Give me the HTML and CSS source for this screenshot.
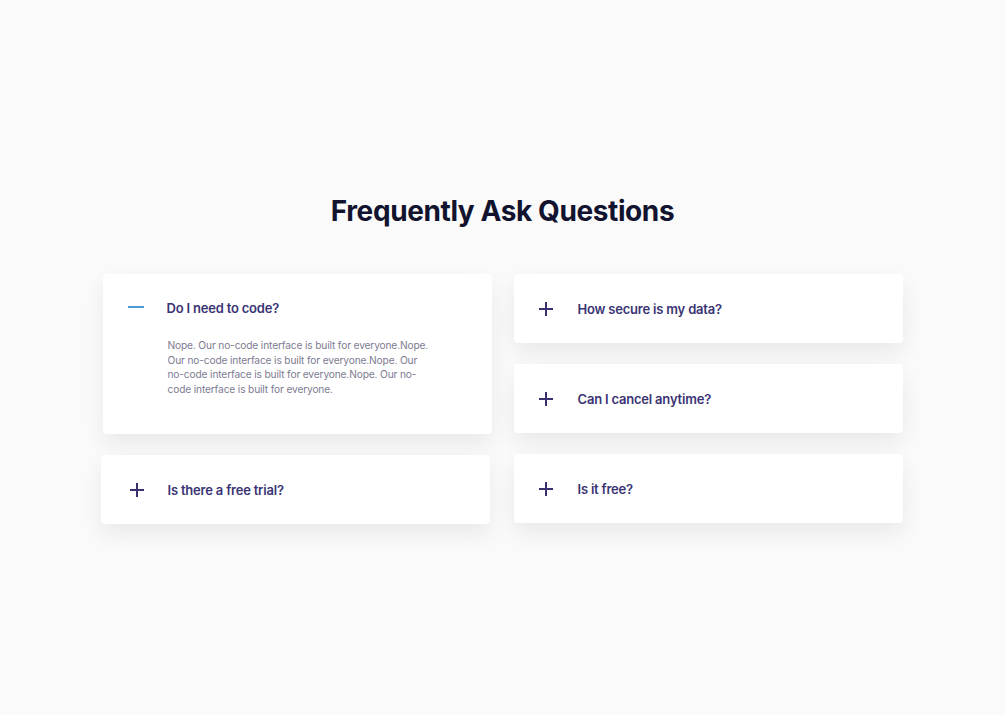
FILE: index.html
```html
<!DOCTYPE html>
<html lang="en">
<head>
<meta charset="utf-8">
<title>FAQ</title>
<link rel="stylesheet" href="styles.css">
</head>
<body>
<main class="faq">
  <h1 class="faq-title">Frequently Ask Questions</h1>
  <div class="faq-grid">
    <div class="faq-col">
      <div class="faq-item open">
        <div class="faq-head">
          <span class="faq-icon minus"></span>
          <span class="faq-q">Do I need to code?</span>
        </div>
        <p class="faq-a">Nope. Our no-code interface is built for everyone.Nope. Our no-code interface is built for everyone.Nope. Our no-code interface is built for everyone.Nope. Our no-code interface is built for everyone.</p>
      </div>
      <div class="faq-item shifted">
        <div class="faq-head">
          <span class="faq-icon plus"></span>
          <span class="faq-q">Is there a free trial?</span>
        </div>
      </div>
    </div>
    <div class="faq-col">
      <div class="faq-item">
        <div class="faq-head">
          <span class="faq-icon plus"></span>
          <span class="faq-q">How secure is my data?</span>
        </div>
      </div>
      <div class="faq-item">
        <div class="faq-head">
          <span class="faq-icon plus"></span>
          <span class="faq-q">Can I cancel anytime?</span>
        </div>
      </div>
      <div class="faq-item">
        <div class="faq-head">
          <span class="faq-icon plus"></span>
          <span class="faq-q">Is it free?</span>
        </div>
      </div>
    </div>
  </div>
</main>
</body>
</html>
```

FILE: styles.css
```css
* { box-sizing: border-box; }
html, body { margin: 0; padding: 0; }
body {
  background: #fafafa;
  font-family: Inter, "Noto Sans", sans-serif;
  width: 1005px;
  height: 715px;
  overflow: hidden;
}
.faq {
  width: 800px;
  margin: 0 auto;
  padding-top: 193px;
  display: flex;
  flex-direction: column;
  align-items: center;
}
.faq-title {
  margin: 0;
  font-size: 28px;
  line-height: 36px;
  font-weight: 700;
  color: #11132f;
  letter-spacing: -0.4px;
}
.faq-grid {
  margin-top: 45px;
  width: 800px;
  display: grid;
  grid-template-columns: 389px 389px;
  column-gap: 22px;
}
.faq-col {
  display: flex;
  flex-direction: column;
  gap: 21px;
}
.faq-item {
  background: #fff;
  border-radius: 4px;
  box-shadow: 0 10px 22px rgba(0, 0, 0, 0.07);
  padding: 25px 20px 24px 25px;
}
.faq-item.open { padding-top: 24px; padding-bottom: 38px; }
.faq-item.shifted {
  margin-left: -2px;
  margin-right: 2px;
  padding-left: 29px;
}
.faq-head {
  display: flex;
  align-items: center;
  height: 20px;
  gap: 25px;
}
.faq-item.shifted .faq-head { gap: 24px; }
.faq-icon {
  position: relative;
  width: 14px;
  height: 14px;
  flex: none;
}
.faq-icon::before,
.faq-icon::after {
  content: "";
  position: absolute;
  background: #3a3070;
}
.faq-icon::before {
  left: 0; right: 0; top: 6px; height: 2px;
}
.faq-icon.plus::after {
  top: 0; bottom: 0; left: 6px; width: 2px;
}
.faq-icon.minus::before {
  background: #4a9bd6;
  width: 16px;
  top: 5px;
}
.faq-icon.minus::after { display: none; }
.faq-q {
  font-size: 13px;
  font-weight: 600;
  color: #3a3474;
  letter-spacing: -0.2px;
}
.faq-a {
  margin: 20px 0 0 40px;
  width: 264px;
  font-size: 10.2px;
  line-height: 14.6px;
  letter-spacing: -0.15px;
  color: #7d7b91;
}
```
